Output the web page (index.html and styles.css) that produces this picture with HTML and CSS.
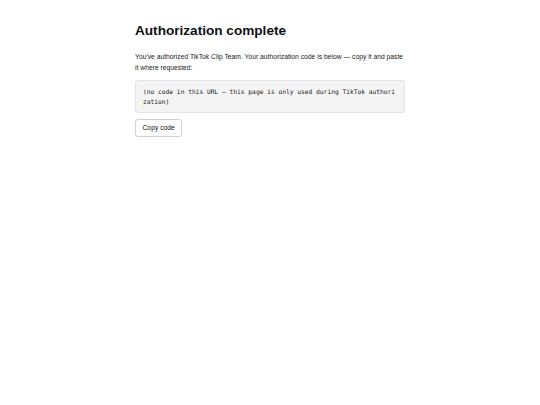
FILE: index.html
```html
<!DOCTYPE html>
<html lang="en">
<head>
<meta charset="utf-8">
<title>Authorization complete</title>
<link rel="stylesheet" href="styles.css">
</head>
<body>
<main class="page">
  <h1 class="title">Authorization complete</h1>
  <p class="lead">You've authorized TikTok Clip Team. Your authorization code is below — copy it and paste it where requested:</p>
  <pre class="code">(no code in this URL — this page is only used during TikTok authorization)</pre>
  <button class="copy" type="button">Copy code</button>
</main>
</body>
</html>
```

FILE: styles.css
```css
html, body {
  margin: 0;
  padding: 0;
  background: #ffffff;
}
body {
  font-family: "Liberation Sans", Arial, sans-serif;
  color: #111111;
}
.page {
  width: 270px;
  margin: 0 auto;
  padding-top: 22.5px;
}
.title {
  margin: 0;
  font-size: 13.6px;
  line-height: 16px;
  font-weight: 700;
  color: #111111;
}
.lead {
  margin: 12.3px 0 0;
  font-size: 6.75px;
  line-height: 11px;
  color: #1a1a1a;
}
.code {
  margin: 7.2px 0 0;
  padding: 5.75px 7px;
  background: #f4f4f4;
  border: 0.75px solid #e4e4e4;
  border-radius: 3px;
  font-family: "DejaVu Sans Mono", monospace;
  font-size: 6.25px;
  line-height: 10px;
  color: #1a1a1a;
  white-space: pre-wrap;
  word-break: break-all;
}
.copy {
  display: block;
  margin-top: 6px;
  padding: 4px 6.5px;
  font-family: "Liberation Sans", Arial, sans-serif;
  font-size: 6.75px;
  line-height: 8px;
  color: #111111;
  background: #ffffff;
  border: 0.75px solid #d0d0d0;
  border-radius: 3px;
}
```
